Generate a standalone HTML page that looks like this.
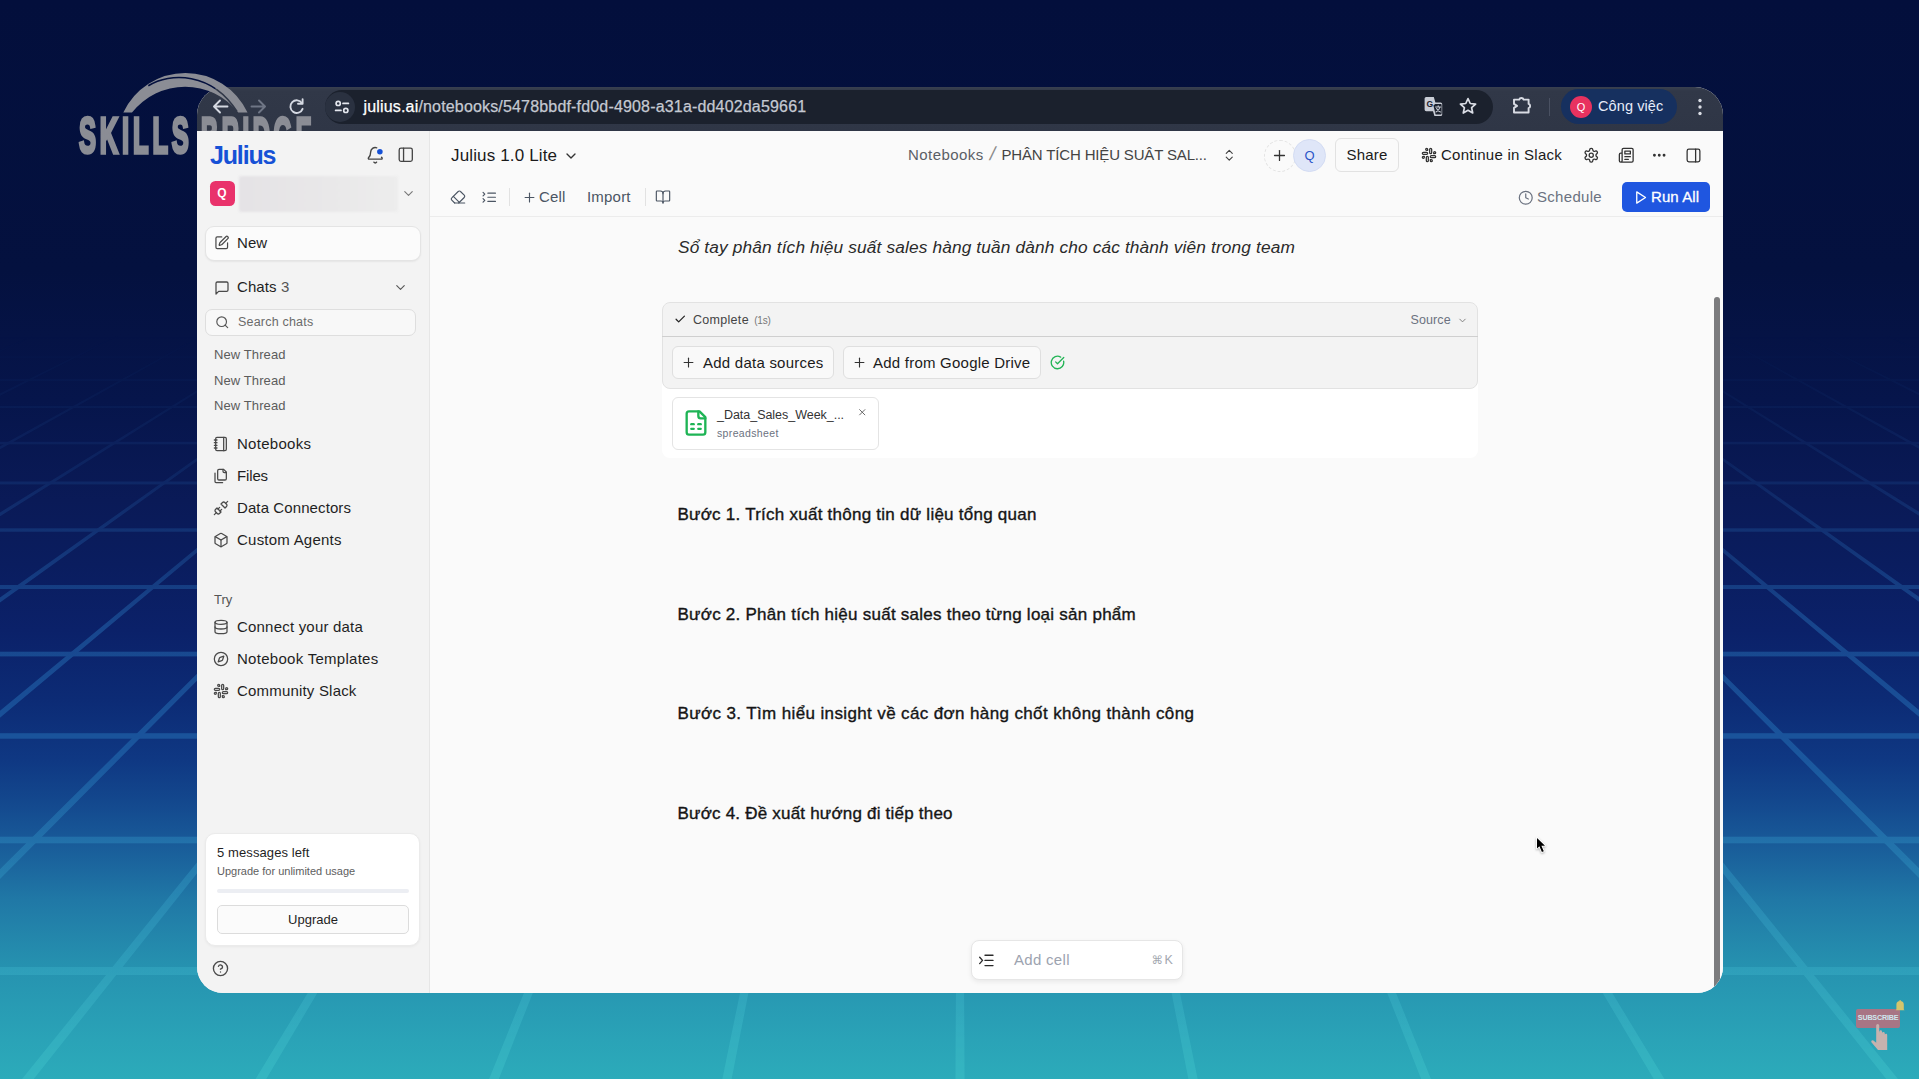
<!DOCTYPE html>
<html lang="vi">
<head>
<meta charset="utf-8">
<title>Julius</title>
<style>
*{box-sizing:border-box;margin:0;padding:0}
html,body{width:1919px;height:1079px;overflow:hidden}
body{font-family:"Liberation Sans",sans-serif;position:relative;background:#04103f;color:#1f1f1f}
.abs{position:absolute}
#bg{position:absolute;left:0;top:0;width:1919px;height:1079px;
 background:linear-gradient(180deg,#030f3c 0px,#04113f 270px,#06154b 400px,#0a1a57 500px,#0a1d5f 565px,#0b2169 630px,#0c2b75 700px,#0f3883 760px,#13478d 800px,#185998 840px,#2078a6 900px,#2693b0 970px,#2aa3b7 1040px,#2cabba 1079px)}
#grid{position:absolute;left:0;top:0;width:1919px;height:1079px}
#win{position:absolute;left:197px;top:87px;width:1526.400px;height:906px;border-radius:28px 28px 26px 26px;overflow:hidden;background:#fafafa}
#chrome{position:absolute;left:0;top:0;width:1527px;height:44px;background:linear-gradient(180deg,#394050 0,#313848 4px,#2f3646 100%)}
#url{position:absolute;left:128px;top:3px;width:1168px;height:34px;border-radius:17px;background:#1b212d}
#url .t{position:absolute;left:38.500px;top:7.500px;font-size:16px;color:#c5c9d2;letter-spacing:.17px;white-space:nowrap;-webkit-text-stroke:.25px #c5c9d2}
#url .t b{font-weight:400;color:#fff;-webkit-text-stroke:.25px #fff}
#side{position:absolute;left:0;top:44px;width:233px;height:862px;background:#f3f3f3;border-right:1px solid #e6e6e6}
#main{position:absolute;left:233px;top:44px;width:1293px;height:862px;background:#fafafa}
.ico{position:absolute;fill:none;stroke:#3f3f46;stroke-width:1.6;stroke-linecap:round;stroke-linejoin:round}
.nav{position:absolute;left:40px;font-size:15px;color:#1f1f1f;white-space:nowrap;letter-spacing:.1px}
.thr{position:absolute;left:17px;font-size:13px;color:#5c5c5c;white-space:nowrap;letter-spacing:.1px}
.h{position:absolute;left:480px;font-size:17px;font-weight:400;color:#151515;white-space:nowrap;-webkit-text-stroke:.36px #151515}
</style>
</head>
<body>
<div id="bg"></div>
<svg id="grid" viewBox="0 0 1919 1079" width="1919" height="1079">
<defs>
<linearGradient id="gfade" x1="0" y1="0" x2="0" y2="1">
<stop offset="0.31" stop-color="#fff" stop-opacity="0"/>
<stop offset="0.44" stop-color="#fff" stop-opacity="0.14"/>
<stop offset="0.58" stop-color="#fff" stop-opacity="0.40"/>
<stop offset="0.70" stop-color="#fff" stop-opacity="0.40"/>
<stop offset="0.83" stop-color="#fff" stop-opacity="0.33"/>
<stop offset="1" stop-color="#fff" stop-opacity="0.27"/>
</linearGradient>
<mask id="gmask" maskUnits="userSpaceOnUse" x="0" y="0" width="1919" height="1079"><rect x="0" y="0" width="1919" height="1079" fill="url(#gfade)"/></mask>
<linearGradient id="gcol" gradientUnits="userSpaceOnUse" x1="0" y1="0" x2="0" y2="1079">
<stop offset="0.3" stop-color="#2f6fc0"/>
<stop offset="0.7" stop-color="#2c86c8"/>
<stop offset="1" stop-color="#4fd6d6"/>
</linearGradient>
</defs>
<g mask="url(#gmask)" fill="url(#gcol)">
<polygon points="-14.6,320 -87.0,350 -159.5,380 -232.0,410 -304.5,440 -376.9,470 -449.4,500 -521.9,530 -594.4,560 -666.9,590 -739.3,620 -811.8,650 -884.3,680 -956.8,710 -1029.2,740 -1101.7,770 -1174.2,800 -1246.7,830 -1319.2,860 -1391.6,890 -1464.1,920 -1536.6,950 -1609.1,980 -1681.5,1010 -1754.0,1040 -1826.5,1070 -1899.0,1100 -1874.7,1100 -1803.0,1070 -1731.4,1040 -1659.7,1010 -1588.0,980 -1516.4,950 -1444.7,920 -1373.0,890 -1301.4,860 -1229.7,830 -1158.0,800 -1086.4,770 -1014.7,740 -943.0,710 -871.4,680 -799.7,650 -728.1,620 -656.4,590 -584.7,560 -513.1,530 -441.4,500 -369.7,470 -298.1,440 -226.4,410 -154.7,380 -83.1,350 -11.4,320"/>
<polygon points="66.6,320 0.2,350 -66.2,380 -132.7,410 -199.1,440 -265.6,470 -332.0,500 -398.5,530 -464.9,560 -531.4,590 -597.8,620 -664.2,650 -730.7,680 -797.1,710 -863.6,740 -930.0,770 -996.5,800 -1062.9,830 -1129.3,860 -1195.8,890 -1262.2,920 -1328.7,950 -1395.1,980 -1461.6,1010 -1528.0,1040 -1594.4,1070 -1660.9,1100 -1638.3,1100 -1572.6,1070 -1506.9,1040 -1441.3,1010 -1375.6,980 -1309.9,950 -1244.2,920 -1178.5,890 -1112.8,860 -1047.1,830 -981.4,800 -915.8,770 -850.1,740 -784.4,710 -718.7,680 -653.0,650 -587.3,620 -521.6,590 -455.9,560 -390.2,530 -324.6,500 -258.9,470 -193.2,440 -127.5,410 -61.8,380 3.9,350 69.6,320"/>
<polygon points="147.8,320 87.4,350 27.0,380 -33.4,410 -93.8,440 -154.2,470 -214.6,500 -275.0,530 -335.4,560 -395.9,590 -456.3,620 -516.7,650 -577.1,680 -637.5,710 -697.9,740 -758.3,770 -818.7,800 -879.1,830 -939.5,860 -999.9,890 -1060.4,920 -1120.8,950 -1181.2,980 -1241.6,1010 -1302.0,1040 -1362.4,1070 -1422.8,1100 -1401.9,1100 -1342.2,1070 -1282.5,1040 -1222.8,1010 -1163.1,980 -1103.4,950 -1043.7,920 -984.0,890 -924.2,860 -864.5,830 -804.8,800 -745.1,770 -685.4,740 -625.7,710 -566.0,680 -506.3,650 -446.6,620 -386.8,590 -327.1,560 -267.4,530 -207.7,500 -148.0,470 -88.3,440 -28.6,410 31.1,380 90.8,350 150.6,320"/>
<polygon points="229.0,320 174.6,350 120.3,380 65.9,410 11.5,440 -42.9,470 -97.2,500 -151.6,530 -206.0,560 -260.4,590 -314.7,620 -369.1,650 -423.5,680 -477.9,710 -532.2,740 -586.6,770 -641.0,800 -695.4,830 -749.7,860 -804.1,890 -858.5,920 -912.9,950 -967.2,980 -1021.6,1010 -1076.0,1040 -1130.4,1070 -1184.7,1100 -1165.5,1100 -1111.8,1070 -1058.1,1040 -1004.3,1010 -950.6,980 -896.9,950 -843.1,920 -789.4,890 -735.7,860 -681.9,830 -628.2,800 -574.5,770 -520.7,740 -467.0,710 -413.3,680 -359.5,650 -305.8,620 -252.1,590 -198.3,560 -144.6,530 -90.9,500 -37.1,470 16.6,440 70.3,410 124.1,380 177.8,350 231.5,320"/>
<polygon points="310.2,320 261.9,350 213.5,380 165.2,410 116.8,440 68.5,470 20.1,500 -28.2,530 -76.5,560 -124.9,590 -173.2,620 -221.6,650 -269.9,680 -318.2,710 -366.6,740 -414.9,770 -463.3,800 -511.6,830 -560.0,860 -608.3,890 -656.6,920 -705.0,950 -753.3,980 -801.7,1010 -850.0,1040 -898.4,1070 -946.7,1100 -929.1,1100 -881.3,1070 -833.6,1040 -785.8,1010 -738.1,980 -690.3,950 -642.6,920 -594.8,890 -547.1,860 -499.3,830 -451.6,800 -403.8,770 -356.0,740 -308.3,710 -260.5,680 -212.8,650 -165.0,620 -117.3,590 -69.5,560 -21.8,530 26.0,500 73.7,470 121.5,440 169.2,410 217.0,380 264.7,350 312.5,320"/>
<polygon points="391.4,320 349.1,350 306.8,380 264.5,410 222.1,440 179.8,470 137.5,500 95.2,530 52.9,560 10.6,590 -31.7,620 -74.0,650 -116.3,680 -158.7,710 -201.0,740 -243.3,770 -285.6,800 -327.9,830 -370.2,860 -412.5,890 -454.8,920 -497.1,950 -539.4,980 -581.8,1010 -624.1,1040 -666.4,1070 -708.7,1100 -692.6,1100 -650.9,1070 -609.1,1040 -567.3,1010 -525.5,980 -483.8,950 -442.0,920 -400.2,890 -358.4,860 -316.7,830 -274.9,800 -233.1,770 -191.3,740 -149.6,710 -107.8,680 -66.0,650 -24.3,620 17.5,590 59.3,560 101.1,530 142.8,500 184.6,470 226.4,440 268.2,410 309.9,380 351.7,350 393.5,320"/>
<polygon points="472.6,320 436.3,350 400.0,380 363.7,410 327.4,440 291.2,470 254.9,500 218.6,530 182.3,560 146.0,590 109.8,620 73.5,650 37.2,680 0.9,710 -35.4,740 -71.6,770 -107.9,800 -144.2,830 -180.5,860 -216.8,890 -253.0,920 -289.3,950 -325.6,980 -361.9,1010 -398.2,1040 -434.4,1070 -470.7,1100 -456.1,1100 -420.3,1070 -384.5,1040 -348.8,1010 -313.0,980 -277.2,950 -241.4,920 -205.6,890 -169.8,860 -134.0,830 -98.2,800 -62.4,770 -26.6,740 9.2,710 45.0,680 80.8,650 116.5,620 152.3,590 188.1,560 223.9,530 259.7,500 295.5,470 331.3,440 367.1,410 402.9,380 438.7,350 474.5,320"/>
<polygon points="553.7,320 523.5,350 493.2,380 463.0,410 432.7,440 402.5,470 372.2,500 342.0,530 311.7,560 281.5,590 251.2,620 221.0,650 190.7,680 160.5,710 130.2,740 100.0,770 69.7,800 39.5,830 9.2,860 -21.0,890 -51.3,920 -81.5,950 -111.8,980 -142.0,1010 -172.3,1040 -202.5,1070 -232.8,1100 -219.6,1100 -189.8,1070 -160.0,1040 -130.2,1010 -100.3,980 -70.5,950 -40.7,920 -10.9,890 18.9,860 48.7,830 78.5,800 108.3,770 138.1,740 167.9,710 197.7,680 227.6,650 257.4,620 287.2,590 317.0,560 346.8,530 376.6,500 406.4,470 436.2,440 466.0,410 495.8,380 525.6,350 555.5,320"/>
<polygon points="634.9,320 610.7,350 586.4,380 562.2,410 538.0,440 513.8,470 489.6,500 465.3,530 441.1,560 416.9,590 392.7,620 368.4,650 344.2,680 320.0,710 295.8,740 271.5,770 247.3,800 223.1,830 198.9,860 174.6,890 150.4,920 126.2,950 102.0,980 77.7,1010 53.5,1040 29.3,1070 5.1,1100 17.0,1100 40.9,1070 64.7,1040 88.5,1010 112.3,980 136.1,950 160.0,920 183.8,890 207.6,860 231.4,830 255.3,800 279.1,770 302.9,740 326.7,710 350.6,680 374.4,650 398.2,620 422.0,590 445.9,560 469.7,530 493.5,500 517.3,470 541.2,440 565.0,410 588.8,380 612.6,350 636.5,320"/>
<polygon points="716.0,320 697.8,350 679.6,380 661.4,410 643.2,440 625.0,470 606.8,500 588.6,530 570.4,560 552.2,590 534.0,620 515.8,650 497.6,680 479.4,710 461.2,740 443.0,770 424.8,800 406.6,830 388.4,860 370.2,890 352.0,920 333.8,950 315.6,980 297.4,1010 279.2,1040 261.0,1070 242.8,1100 253.7,1100 271.6,1070 289.4,1040 307.2,1010 325.1,980 342.9,950 360.7,920 378.6,890 396.4,860 414.3,830 432.1,800 449.9,770 467.8,740 485.6,710 503.4,680 521.3,650 539.1,620 556.9,590 574.8,560 592.6,530 610.5,500 628.3,470 646.1,440 664.0,410 681.8,380 699.6,350 717.5,320"/>
<polygon points="797.2,320 785.0,350 772.8,380 760.6,410 748.5,440 736.3,470 724.1,500 711.9,530 699.7,560 687.6,590 675.4,620 663.2,650 651.0,680 638.8,710 626.7,740 614.5,770 602.3,800 590.1,830 577.9,860 565.8,890 553.6,920 541.4,950 529.2,980 517.0,1010 504.9,1040 492.7,1070 480.5,1100 490.5,1100 502.4,1070 514.2,1040 526.1,1010 537.9,980 549.8,950 561.6,920 573.5,890 585.3,860 597.1,830 609.0,800 620.8,770 632.7,740 644.5,710 656.4,680 668.2,650 680.1,620 691.9,590 703.7,560 715.6,530 727.4,500 739.3,470 751.1,440 763.0,410 774.8,380 786.6,350 798.5,320"/>
<polygon points="878.3,320 872.1,350 866.0,380 859.8,410 853.6,440 847.5,470 841.3,500 835.1,530 829.0,560 822.8,590 816.6,620 810.5,650 804.3,680 798.2,710 792.0,740 785.8,770 779.7,800 773.5,830 767.3,860 761.2,890 755.0,920 748.8,950 742.7,980 736.5,1010 730.3,1040 724.2,1070 718.0,1100 727.5,1100 733.4,1070 739.2,1040 745.1,1010 750.9,980 756.8,950 762.6,920 768.4,890 774.3,860 780.1,830 786.0,800 791.8,770 797.7,740 803.5,710 809.4,680 815.2,650 821.1,620 826.9,590 832.8,560 838.6,530 844.5,500 850.3,470 856.2,440 862.0,410 867.8,380 873.7,350 879.5,320"/>
<polygon points="959.4,320 959.2,350 959.1,380 958.9,410 958.8,440 958.6,470 958.5,500 958.3,530 958.1,560 958.0,590 957.8,620 957.7,650 957.5,680 957.4,710 957.2,740 957.1,770 956.9,800 956.7,830 956.6,860 956.4,890 956.3,920 956.1,950 956.0,980 955.8,1010 955.6,1040 955.5,1070 955.3,1100 964.7,1100 964.5,1070 964.4,1040 964.2,1010 964.0,980 963.9,950 963.7,920 963.6,890 963.4,860 963.3,830 963.1,800 962.9,770 962.8,740 962.6,710 962.5,680 962.3,650 962.2,620 962.0,590 961.9,560 961.7,530 961.5,500 961.4,470 961.2,440 961.1,410 960.9,380 960.8,350 960.6,320"/>
<polygon points="1040.5,320 1046.3,350 1052.2,380 1058.0,410 1063.8,440 1069.7,470 1075.5,500 1081.4,530 1087.2,560 1093.1,590 1098.9,620 1104.8,650 1110.6,680 1116.5,710 1122.3,740 1128.2,770 1134.0,800 1139.9,830 1145.7,860 1151.6,890 1157.4,920 1163.2,950 1169.1,980 1174.9,1010 1180.8,1040 1186.6,1070 1192.5,1100 1202.0,1100 1195.8,1070 1189.7,1040 1183.5,1010 1177.3,980 1171.2,950 1165.0,920 1158.8,890 1152.7,860 1146.5,830 1140.3,800 1134.2,770 1128.0,740 1121.8,710 1115.7,680 1109.5,650 1103.4,620 1097.2,590 1091.0,560 1084.9,530 1078.7,500 1072.5,470 1066.4,440 1060.2,410 1054.0,380 1047.9,350 1041.7,320"/>
<polygon points="1121.5,320 1133.4,350 1145.2,380 1157.0,410 1168.9,440 1180.7,470 1192.6,500 1204.4,530 1216.3,560 1228.1,590 1239.9,620 1251.8,650 1263.6,680 1275.5,710 1287.3,740 1299.2,770 1311.0,800 1322.9,830 1334.7,860 1346.5,890 1358.4,920 1370.2,950 1382.1,980 1393.9,1010 1405.8,1040 1417.6,1070 1429.5,1100 1439.5,1100 1427.3,1070 1415.1,1040 1403.0,1010 1390.8,980 1378.6,950 1366.4,920 1354.2,890 1342.1,860 1329.9,830 1317.7,800 1305.5,770 1293.3,740 1281.2,710 1269.0,680 1256.8,650 1244.6,620 1232.4,590 1220.3,560 1208.1,530 1195.9,500 1183.7,470 1171.5,440 1159.4,410 1147.2,380 1135.0,350 1122.8,320"/>
<polygon points="1202.5,320 1220.4,350 1238.2,380 1256.0,410 1273.9,440 1291.7,470 1309.5,500 1327.4,530 1345.2,560 1363.1,590 1380.9,620 1398.7,650 1416.6,680 1434.4,710 1452.2,740 1470.1,770 1487.9,800 1505.7,830 1523.6,860 1541.4,890 1559.3,920 1577.1,950 1594.9,980 1612.8,1010 1630.6,1040 1648.4,1070 1666.3,1100 1677.2,1100 1659.0,1070 1640.8,1040 1622.6,1010 1604.4,980 1586.2,950 1568.0,920 1549.8,890 1531.6,860 1513.4,830 1495.2,800 1477.0,770 1458.8,740 1440.6,710 1422.4,680 1404.2,650 1386.0,620 1367.8,590 1349.6,560 1331.4,530 1313.2,500 1295.0,470 1276.8,440 1258.6,410 1240.4,380 1222.2,350 1204.0,320"/>
<polygon points="1283.5,320 1307.4,350 1331.2,380 1355.0,410 1378.8,440 1402.7,470 1426.5,500 1450.3,530 1474.1,560 1498.0,590 1521.8,620 1545.6,650 1569.4,680 1593.3,710 1617.1,740 1640.9,770 1664.7,800 1688.6,830 1712.4,860 1736.2,890 1760.0,920 1783.9,950 1807.7,980 1831.5,1010 1855.3,1040 1879.1,1070 1903.0,1100 1914.9,1100 1890.7,1070 1866.5,1040 1842.3,1010 1818.0,980 1793.8,950 1769.6,920 1745.4,890 1721.1,860 1696.9,830 1672.7,800 1648.5,770 1624.2,740 1600.0,710 1575.8,680 1551.6,650 1527.3,620 1503.1,590 1478.9,560 1454.7,530 1430.4,500 1406.2,470 1382.0,440 1357.8,410 1333.6,380 1309.3,350 1285.1,320"/>
<polygon points="1364.5,320 1394.4,350 1424.2,380 1454.0,410 1483.8,440 1513.6,470 1543.4,500 1573.2,530 1603.0,560 1632.8,590 1662.6,620 1692.4,650 1722.3,680 1752.1,710 1781.9,740 1811.7,770 1841.5,800 1871.3,830 1901.1,860 1930.9,890 1960.7,920 1990.5,950 2020.3,980 2050.2,1010 2080.0,1040 2109.8,1070 2139.6,1100 2152.8,1100 2122.5,1070 2092.3,1040 2062.0,1010 2031.8,980 2001.5,950 1971.3,920 1941.0,890 1910.8,860 1880.5,830 1850.3,800 1820.0,770 1789.8,740 1759.5,710 1729.3,680 1699.0,650 1668.8,620 1638.5,590 1608.3,560 1578.0,530 1547.8,500 1517.5,470 1487.3,440 1457.0,410 1426.8,380 1396.5,350 1366.3,320"/>
<polygon points="1445.5,320 1481.3,350 1517.1,380 1552.9,410 1588.7,440 1624.5,470 1660.3,500 1696.1,530 1731.9,560 1767.7,590 1803.5,620 1839.2,650 1875.0,680 1910.8,710 1946.6,740 1982.4,770 2018.2,800 2054.0,830 2089.8,860 2125.6,890 2161.4,920 2197.2,950 2233.0,980 2268.8,1010 2304.5,1040 2340.3,1070 2376.1,1100 2390.7,1100 2354.4,1070 2318.2,1040 2281.9,1010 2245.6,980 2209.3,950 2173.0,920 2136.8,890 2100.5,860 2064.2,830 2027.9,800 1991.6,770 1955.4,740 1919.1,710 1882.8,680 1846.5,650 1810.2,620 1774.0,590 1737.7,560 1701.4,530 1665.1,500 1628.8,470 1592.6,440 1556.3,410 1520.0,380 1483.7,350 1447.4,320"/>
<polygon points="1526.5,320 1568.3,350 1610.1,380 1651.8,410 1693.6,440 1735.4,470 1777.2,500 1818.9,530 1860.7,560 1902.5,590 1944.3,620 1986.0,650 2027.8,680 2069.6,710 2111.3,740 2153.1,770 2194.9,800 2236.7,830 2278.4,860 2320.2,890 2362.0,920 2403.8,950 2445.5,980 2487.3,1010 2529.1,1040 2570.9,1070 2612.6,1100 2628.7,1100 2586.4,1070 2544.1,1040 2501.8,1010 2459.4,980 2417.1,950 2374.8,920 2332.5,890 2290.2,860 2247.9,830 2205.6,800 2163.3,770 2121.0,740 2078.7,710 2036.3,680 1994.0,650 1951.7,620 1909.4,590 1867.1,560 1824.8,530 1782.5,500 1740.2,470 1697.9,440 1655.5,410 1613.2,380 1570.9,350 1528.6,320"/>
<polygon points="1607.5,320 1655.3,350 1703.0,380 1750.8,410 1798.5,440 1846.3,470 1894.0,500 1941.8,530 1989.5,560 2037.3,590 2085.0,620 2132.8,650 2180.5,680 2228.3,710 2276.0,740 2323.8,770 2371.6,800 2419.3,830 2467.1,860 2514.8,890 2562.6,920 2610.3,950 2658.1,980 2705.8,1010 2753.6,1040 2801.3,1070 2849.1,1100 2866.7,1100 2818.4,1070 2770.0,1040 2721.7,1010 2673.3,980 2625.0,950 2576.6,920 2528.3,890 2480.0,860 2431.6,830 2383.3,800 2334.9,770 2286.6,740 2238.2,710 2189.9,680 2141.6,650 2093.2,620 2044.9,590 1996.5,560 1948.2,530 1899.9,500 1851.5,470 1803.2,440 1754.8,410 1706.5,380 1658.1,350 1609.8,320"/>
<polygon points="1688.5,320 1742.2,350 1795.9,380 1849.7,410 1903.4,440 1957.1,470 2010.9,500 2064.6,530 2118.3,560 2172.1,590 2225.8,620 2279.5,650 2333.3,680 2387.0,710 2440.7,740 2494.5,770 2548.2,800 2601.9,830 2655.7,860 2709.4,890 2763.1,920 2816.9,950 2870.6,980 2924.3,1010 2978.1,1040 3031.8,1070 3085.5,1100 3104.7,1100 3050.4,1070 2996.0,1040 2941.6,1010 2887.2,980 2832.9,950 2778.5,920 2724.1,890 2669.7,860 2615.4,830 2561.0,800 2506.6,770 2452.2,740 2397.9,710 2343.5,680 2289.1,650 2234.7,620 2180.4,590 2126.0,560 2071.6,530 2017.2,500 1962.9,470 1908.5,440 1854.1,410 1799.7,380 1745.4,350 1691.0,320"/>
<polygon points="1769.4,320 1829.2,350 1888.9,380 1948.6,410 2008.3,440 2068.0,470 2127.7,500 2187.4,530 2247.1,560 2306.8,590 2366.6,620 2426.3,650 2486.0,680 2545.7,710 2605.4,740 2665.1,770 2724.8,800 2784.5,830 2844.2,860 2904.0,890 2963.7,920 3023.4,950 3083.1,980 3142.8,1010 3202.5,1040 3262.2,1070 3321.9,1100 3342.8,1100 3282.4,1070 3222.0,1040 3161.6,1010 3101.2,980 3040.8,950 2980.4,920 2919.9,890 2859.5,860 2799.1,830 2738.7,800 2678.3,770 2617.9,740 2557.5,710 2497.1,680 2436.7,650 2376.3,620 2315.9,590 2255.4,560 2195.0,530 2134.6,500 2074.2,470 2013.8,440 1953.4,410 1893.0,380 1832.6,350 1772.2,320"/>
<polygon points="1850.4,320 1916.1,350 1981.8,380 2047.5,410 2113.2,440 2178.9,470 2244.6,500 2310.2,530 2375.9,560 2441.6,590 2507.3,620 2573.0,650 2638.7,680 2704.4,710 2770.1,740 2835.8,770 2901.4,800 2967.1,830 3032.8,860 3098.5,890 3164.2,920 3229.9,950 3295.6,980 3361.3,1010 3426.9,1040 3492.6,1070 3558.3,1100 3580.9,1100 3514.4,1070 3448.0,1040 3381.6,1010 3315.1,980 3248.7,950 3182.2,920 3115.8,890 3049.3,860 2982.9,830 2916.5,800 2850.0,770 2783.6,740 2717.1,710 2650.7,680 2584.2,650 2517.8,620 2451.4,590 2384.9,560 2318.5,530 2252.0,500 2185.6,470 2119.1,440 2052.7,410 1986.2,380 1919.8,350 1853.4,320"/>
<polygon points="1931.4,320 2003.1,350 2074.7,380 2146.4,410 2218.1,440 2289.7,470 2361.4,500 2433.1,530 2504.7,560 2576.4,590 2648.1,620 2719.7,650 2791.4,680 2863.0,710 2934.7,740 3006.4,770 3078.0,800 3149.7,830 3221.4,860 3293.0,890 3364.7,920 3436.4,950 3508.0,980 3579.7,1010 3651.4,1040 3723.0,1070 3794.7,1100 3819.0,1100 3746.5,1070 3674.0,1040 3601.5,1010 3529.1,980 3456.6,950 3384.1,920 3311.6,890 3239.2,860 3166.7,830 3094.2,800 3021.7,770 2949.2,740 2876.8,710 2804.3,680 2731.8,650 2659.3,620 2586.9,590 2514.4,560 2441.9,530 2369.4,500 2296.9,470 2224.5,440 2152.0,410 2079.5,380 2007.0,350 1934.6,320"/>
<rect x="0" y="967.0" width="1919" height="8.0"/>
<rect x="0" y="836.7" width="1919" height="6.6"/>
<rect x="0" y="733.2" width="1919" height="5.5"/>
<rect x="0" y="651.7" width="1919" height="4.7"/>
<rect x="0" y="585.0" width="1919" height="4.0"/>
<rect x="0" y="528.3" width="1919" height="3.4"/>
<rect x="0" y="481.5" width="1919" height="2.9"/>
<rect x="0" y="441.8" width="1919" height="2.5"/>
<rect x="0" y="405.9" width="1919" height="2.1"/>
<rect x="0" y="379.1" width="1919" height="1.8"/>
<rect x="0" y="356.2" width="1919" height="1.6"/>
<rect x="0" y="337.3" width="1919" height="1.4"/>
</g>
</svg>

<div id="win">
 <div id="chrome">
  <svg class="abs" style="left:0;top:0" width="1526" height="44" viewBox="0 0 1526 44" fill="none" stroke-linecap="round" stroke-linejoin="round">
   <!-- back -->
   <path d="M30.5 19.5H17.5M23 13.5l-6 6 6 6" stroke="#d5d9e2" stroke-width="1.9"/>
   <!-- forward -->
   <path d="M54.5 19.5h13M62 13.5l6 6-6 6" stroke="#6f7686" stroke-width="1.9"/>
   <!-- reload -->
   <path d="M105 16.2a6.3 6.3 0 1 0 .6 5.6" stroke="#d5d9e2" stroke-width="1.9"/>
   <path d="M105.6 12.2v4.6h-4.6" stroke="#d5d9e2" stroke-width="1.9"/>
  </svg>
  <div id="url">
   <div class="abs" style="left:0;top:2px;width:30px;height:30px;border-radius:15px;background:#2a3140"></div>
   <svg class="abs" style="left:8px;top:8px" width="18" height="18" viewBox="0 0 18 18" fill="none" stroke="#e4e7ee" stroke-width="1.7" stroke-linecap="round">
    <circle cx="5.2" cy="5.4" r="2.1"/><path d="M10 5.4h5.4"/><circle cx="12.8" cy="12.4" r="2.1"/><path d="M2.6 12.4H8"/>
   </svg>
   <div class="t"><b>julius.ai</b>/notebooks/5478bbdf-fd0d-4908-a31a-dd402da59661</div>
   <!-- translate -->
   <svg class="abs" style="left:1099px;top:6px" width="20" height="21" viewBox="0 0 20 21">
    <path d="M2.200 1h7.600l1.600 5.400h5.200a1.600 1.600 0 0 1 1.600 1.600v10.400a1.600 1.600 0 0 1-1.600 1.600H10.400L9 15.200H2.200A1.600 1.600 0 0 1 .600 13.600V2.600A1.600 1.600 0 0 1 2.200 1z" fill="#c9cdd6"/>
    <path d="M11.200 8h5.600a.8.800 0 0 1 .8.800v9a.8.800 0 0 1-.8.800h-5.200L9.400 9.600z" fill="#1b212d"/>
    <text x="2.400" y="11.400" font-family="Liberation Sans,sans-serif" font-size="8.500" font-weight="700" fill="#1b212d">G</text>
    <path d="M11.600 11h5.200M14.200 9.800V11M16 11c-.5 2.200-2 4-4 5M12.600 12.600c.7 1.500 2 2.700 3.800 3.400" stroke="#c9cdd6" stroke-width="1.100" fill="none" stroke-linecap="round"/>
   </svg>
   <!-- star -->
   <svg class="abs" style="left:1133px;top:6.300px" width="20" height="20" viewBox="0 0 20 20" fill="none" stroke="#d9dce4" stroke-width="1.7" stroke-linejoin="round">
    <path d="M10 2.6l2.25 4.9 5.35.6-3.98 3.62 1.1 5.28L10 14.3l-4.72 2.7 1.1-5.28L2.4 8.1l5.35-.6z"/>
   </svg>
  </div>
  <!-- extensions -->
  <svg class="abs" style="left:1313.500px;top:7px" width="22" height="22" viewBox="0 0 22 22" fill="none" stroke="#d9dce4" stroke-width="1.900" stroke-linejoin="round">
   <path d="M3 5.600h5.200a2.300 2.300 0 0 1 4.400 0h5v4.300a2.200 2.200 0 0 1 0 4.200v4.400H3v-4.600l3-2-3-2z"/>
  </svg>
  <div class="abs" style="left:1352px;top:11px;width:1px;height:18px;background:#4a5162"></div>
  <div class="abs" style="left:1364px;top:2px;width:116px;height:35px;border-radius:18px;background:#16305f"></div>
  <div class="abs" style="left:1373px;top:9px;width:22px;height:22px;border-radius:11px;background:#e8325f;color:#fff;font-size:11px;line-height:22px;text-align:center">Q</div>
  <div class="abs" style="left:1401px;top:11px;font-size:14.5px;color:#e6ecfa;white-space:nowrap;letter-spacing:.1px">Công việc</div>
  <svg class="abs" style="left:1498px;top:9px" width="10" height="22" viewBox="0 0 10 22" fill="#d9dce4"><circle cx="5" cy="4.5" r="1.7"/><circle cx="5" cy="11" r="1.7"/><circle cx="5" cy="17.5" r="1.7"/></svg>
 </div>
 <div id="side">
  <div class="abs" style="left:13px;top:8.800px;font-size:25px;font-weight:700;color:#1651d6;letter-spacing:-1.150px;line-height:30px">Julius</div>
  <svg class="ico" style="left:169.25px;top:14.75px;stroke:#444;stroke-width:1.8" width="18.5" height="18.5" viewBox="0 0 24 24"><path d="M10.268 21a2 2 0 0 0 3.464 0"/><path d="M13.916 2.314A6 6 0 0 0 6 8c0 4.499-1.411 5.956-2.738 7.326A1 1 0 0 0 4 17h16a1 1 0 0 0 .74-1.673 9 9 0 0 1-.585-.665"/><circle cx="18" cy="7.500" r="3.600" fill="#1651d6" stroke="none"/></svg>
  <svg class="ico" style="left:199.75px;top:15.25px;stroke:#444;stroke-width:1.8" width="17.5" height="17.5" viewBox="0 0 24 24"><rect width="18" height="18" x="3" y="3" rx="2.500"/><path d="M9 3v18"/></svg>
  <div class="abs" style="left:12.500px;top:49.600px;width:25px;height:25px;border-radius:5.500px;background:#e9326b;color:#fff;font-size:12px;font-weight:700;line-height:25px;text-align:center">Q</div>
  <div class="abs" style="left:41.500px;top:44.500px;width:159px;height:36px;border-radius:2px;background:linear-gradient(90deg,#e5e3e6,#e9e8e9 55%,#ededed);filter:blur(1px)"></div>
  <svg class="ico" style="left:204px;top:54.5px;stroke:#777;stroke-width:1.8" width="15" height="15" viewBox="0 0 24 24"><path d="m6 9 6 6 6-6"/></svg>

  <div class="abs" style="left:7.500px;top:94.500px;width:216.300px;height:35.400px;border-radius:9px;background:#fbfbfb;border:1px solid #e4e4e4;box-shadow:0 1px 2px rgba(0,0,0,.06)"></div>
  <svg class="ico" style="left:16.75px;top:104.25px;stroke:#4a4a4a;stroke-width:1.9" width="15.5" height="15.5" viewBox="0 0 24 24"><path d="M12 3H5a2 2 0 0 0-2 2v14a2 2 0 0 0 2 2h14a2 2 0 0 0 2-2v-7"/><path d="M18.375 2.625a1 1 0 0 1 3 3l-9.013 9.014a2 2 0 0 1-.853.505l-2.873.84a.5.5 0 0 1-.62-.62l.84-2.873a2 2 0 0 1 .506-.852z"/></svg>
  <div class="nav" style="top:103px">New</div>

  <svg class="ico" style="left:16.5px;top:148.5px;stroke:#4a4a4a;stroke-width:1.9" width="16" height="16" viewBox="0 0 24 24"><path d="M21 15a2 2 0 0 1-2 2H7l-4 4V5a2 2 0 0 1 2-2h14a2 2 0 0 1 2 2z"/></svg>
  <div class="nav" style="top:147px">Chats <span style="color:#555">3</span></div>
  <svg class="ico" style="left:195.5px;top:149px;stroke:#555;stroke-width:1.8" width="15" height="15" viewBox="0 0 24 24"><path d="m6 9 6 6 6-6"/></svg>

  <div class="abs" style="left:8.300px;top:177.800px;width:210.500px;height:27.500px;border-radius:7px;background:#f8f8f8;border:1px solid #dedede"></div>
  <svg class="ico" style="left:18.25px;top:184.25px;stroke:#555;stroke-width:1.9" width="14.5" height="14.5" viewBox="0 0 24 24"><circle cx="11" cy="11" r="8"/><path d="m21 21-4.300-4.300"/></svg>
  <div class="abs" style="left:41px;top:184px;font-size:12.500px;color:#6b6b6b;white-space:nowrap;letter-spacing:.2px">Search chats</div>

  <div class="thr" style="top:216px">New Thread</div>
  <div class="thr" style="top:242px">New Thread</div>
  <div class="thr" style="top:267px">New Thread</div>

  <svg class="ico" style="left:15.7px;top:305px;stroke:#4a4a4a;stroke-width:1.9" width="16" height="16" viewBox="0 0 24 24"><path d="M2 6h4"/><path d="M2 10h4"/><path d="M2 14h4"/><path d="M2 18h4"/><rect width="16" height="20" x="4" y="2" rx="2"/><path d="M16 2v20"/></svg>
  <div class="nav" style="top:304px;letter-spacing:.28px">Notebooks</div>
  <svg class="ico" style="left:16.3px;top:337px;stroke:#4a4a4a;stroke-width:1.9" width="16" height="16" viewBox="0 0 24 24"><path d="M20 7h-3a2 2 0 0 1-2-2V2"/><path d="M9 18a2 2 0 0 1-2-2V4a2 2 0 0 1 2-2h7l4 4v10a2 2 0 0 1-2 2Z"/><path d="M3 7.600v12.800A1.600 1.600 0 0 0 4.600 22h9.800"/></svg>
  <div class="nav" style="top:336px;letter-spacing:-.14px">Files</div>
  <svg class="ico" style="left:16.3px;top:369px;stroke:#4a4a4a;stroke-width:1.9" width="16" height="16" viewBox="0 0 24 24"><path d="m19 5 3-3"/><path d="m2 22 3-3"/><path d="M6.300 20.300a2.400 2.400 0 0 0 3.400 0L12 18l-6-6-2.300 2.300a2.400 2.400 0 0 0 0 3.400Z"/><path d="M7.500 13.500 10 11"/><path d="M10.500 16.500 13 14"/><path d="m12 6 6 6 2.300-2.300a2.400 2.400 0 0 0 0-3.400l-2.600-2.600a2.400 2.400 0 0 0-3.400 0Z"/></svg>
  <div class="nav" style="top:368px">Data Connectors</div>
  <svg class="ico" style="left:16.3px;top:400.5px;stroke:#4a4a4a;stroke-width:1.9" width="16" height="16" viewBox="0 0 24 24"><path d="M21 8a2 2 0 0 0-1-1.730l-7-4a2 2 0 0 0-2 0l-7 4A2 2 0 0 0 3 8v8a2 2 0 0 0 1 1.730l7 4a2 2 0 0 0 2 0l7-4A2 2 0 0 0 21 16Z"/><path d="m3.300 7 8.700 5 8.700-5"/><path d="M12 22V12"/></svg>
  <div class="nav" style="top:400px;letter-spacing:.23px">Custom Agents</div>

  <div class="abs" style="left:17px;top:461px;font-size:13px;color:#555">Try</div>
  <svg class="ico" style="left:16px;top:488.3px;stroke:#4a4a4a;stroke-width:1.9" width="16" height="16" viewBox="0 0 24 24"><ellipse cx="12" cy="5" rx="9" ry="3"/><path d="M3 5V19A9 3 0 0 0 21 19V5"/><path d="M3 12A9 3 0 0 0 21 12"/></svg>
  <div class="nav" style="top:487px;letter-spacing:.2px">Connect your data</div>
  <svg class="ico" style="left:16px;top:520px;stroke:#4a4a4a;stroke-width:1.9" width="16" height="16" viewBox="0 0 24 24"><path d="m16.240 7.760-1.804 5.411a2 2 0 0 1-1.265 1.265L7.760 16.240l1.804-5.411a2 2 0 0 1 1.265-1.265z"/><circle cx="12" cy="12" r="10"/></svg>
  <div class="nav" style="top:519px;letter-spacing:.28px">Notebook Templates</div>
  <svg class="ico" style="left:16px;top:552px;stroke:#4a4a4a;stroke-width:1.9" width="16" height="16" viewBox="0 0 24 24"><rect width="3" height="8" x="13" y="2" rx="1.500"/><path d="M19 8.500V10h1.500A1.500 1.500 0 1 0 19 8.500"/><rect width="3" height="8" x="8" y="14" rx="1.500"/><path d="M5 15.500V14H3.500A1.500 1.500 0 1 0 5 15.500"/><rect width="8" height="3" x="14" y="13" rx="1.500"/><path d="M15.500 19H14v1.500a1.500 1.500 0 1 0 1.500-1.500"/><rect width="8" height="3" x="2" y="8" rx="1.500"/><path d="M8.500 5H10V3.500A1.500 1.500 0 1 0 8.500 5"/></svg>
  <div class="nav" style="top:551px;letter-spacing:.19px">Community Slack</div>

  <div class="abs" style="left:8.300px;top:701.800px;width:215px;height:112.800px;border-radius:10px;background:#fff;border:1px solid #ebebeb;box-shadow:0 1px 3px rgba(0,0,0,.05)"></div>
  <div class="abs" style="left:20px;top:714px;font-size:13px;color:#1f1f1f;white-space:nowrap;letter-spacing:.1px">5 messages left</div>
  <div class="abs" style="left:20px;top:733.600px;font-size:11px;color:#5e5e5e;white-space:nowrap">Upgrade for unlimited usage</div>
  <div class="abs" style="left:20px;top:758px;width:192px;height:4px;border-radius:2px;background:#eceef3"></div>
  <div class="abs" style="left:20px;top:774px;width:192px;height:29px;border-radius:5px;background:#fbfbfb;border:1px solid #dcdcdc;font-size:13px;line-height:27px;text-align:center;color:#1f1f1f">Upgrade</div>
  <svg class="ico" style="left:14.5px;top:829.2px;stroke:#4a4a4a;stroke-width:1.9" width="17" height="17" viewBox="0 0 24 24"><circle cx="12" cy="12" r="10"/><path d="M9.090 9a3 3 0 0 1 5.830 1c0 2-3 3-3 3"/><path d="M12 17h.010"/></svg>
 </div>
 <div id="main">
  <div class="abs" style="left:21px;top:15px;font-size:17px;color:#1b1b1b;white-space:nowrap;letter-spacing:.15px">Julius 1.0 Lite</div>

  <div class="abs" style="left:478px;top:15px;font-size:15px;color:#5a5f66;white-space:nowrap;letter-spacing:.44px">Notebooks</div>
  <div class="abs" style="left:559.500px;top:11.500px;font-size:19px;color:#8a8a8a;white-space:nowrap;transform:skewX(-12deg)">/</div>
  <div class="abs" style="left:571.500px;top:15px;font-size:15px;color:#444;white-space:nowrap;letter-spacing:-.16px">PHÂN TÍCH HIỆU SUÂT SAL...</div>

  <div class="abs" style="left:834px;top:9px;width:32px;height:32px;border-radius:16px;border:1px dashed #e3e3e3"></div>
  <div class="abs" style="left:863px;top:7.800px;width:33px;height:33px;border-radius:16.500px;background:#dfe6f8;border:1px solid #d3dcf3;color:#2a55c8;font-size:13px;line-height:31px;text-align:center">Q</div>
  <div class="abs" style="left:905px;top:7px;width:64px;height:34px;border-radius:6px;background:#fafafa;border:1px solid #e2e2e2;font-size:15px;line-height:32px;text-align:center;color:#1b1b1b;letter-spacing:.2px">Share</div>
  <div class="abs" style="left:1011px;top:15px;font-size:15px;color:#1b1b1b;white-space:nowrap;letter-spacing:.25px">Continue in Slack</div>

  <!-- toolbar row -->
  <div class="abs" style="left:79px;top:57px;width:1px;height:18px;background:#e2e2e2"></div>
  <div class="abs" style="left:109px;top:57px;font-size:15px;color:#4b5563;white-space:nowrap;letter-spacing:.2px">Cell</div>
  <div class="abs" style="left:157px;top:57px;font-size:15px;color:#4b5563;white-space:nowrap;letter-spacing:.2px">Import</div>
  <div class="abs" style="left:215px;top:57px;width:1px;height:18px;background:#e2e2e2"></div>
  <div class="abs" style="left:1107px;top:57px;font-size:15px;color:#6b7280;white-space:nowrap;letter-spacing:.3px">Schedule</div>
  <div class="abs" style="left:1192px;top:51px;width:88px;height:30px;border-radius:5px;background:#1f56e0"></div>
  <div class="abs" style="left:1221px;top:57px;font-size:15px;color:#fff;white-space:nowrap;-webkit-text-stroke:.3px #fff;letter-spacing:.1px">Run All</div>
  <div class="abs" style="left:0;top:85px;width:1293px;height:1px;background:#ececec"></div>

  <!-- content -->
  <div class="abs" style="left:248px;top:105.500px;font-size:17.300px;font-style:italic;color:#2a2a2a;white-space:nowrap;letter-spacing:.14px">Sổ tay phân tích hiệu suất sales hàng tuần dành cho các thành viên trong team</div>

  <div class="abs" style="left:232px;top:171px;width:816px;height:156px;border-radius:8px;background:#fff"></div>
  <div class="abs" style="left:232px;top:171px;width:816px;height:87px;border-radius:8px;background:#f3f3f3;border:1px solid #e2e2e2"></div>
  <div class="abs" style="left:232px;top:204.700px;width:816px;height:1px;background:#cfcfcf"></div>
  <div class="abs" style="left:263px;top:181.800px;font-size:12.500px;color:#444;white-space:nowrap;letter-spacing:.3px">Complete <span style="font-size:10px;color:#777;letter-spacing:-.2px;margin-left:1.500px">(1s)</span></div>
  <div class="abs" style="left:980.500px;top:182px;font-size:12.500px;color:#6b7280;white-space:nowrap;letter-spacing:.1px">Source</div>

  <div class="abs" style="left:242px;top:214.500px;width:161.500px;height:33.500px;border-radius:6px;background:#f9f9f9;border:1px solid #dfdfdf"></div>
  <div class="abs" style="left:273px;top:223px;font-size:15px;color:#1b1b1b;white-space:nowrap;letter-spacing:.24px">Add data sources</div>
  <div class="abs" style="left:412.500px;top:214.500px;width:198.500px;height:33.500px;border-radius:6px;background:#f9f9f9;border:1px solid #dfdfdf"></div>
  <div class="abs" style="left:443px;top:223px;font-size:15px;color:#1b1b1b;white-space:nowrap;letter-spacing:.23px">Add from Google Drive</div>

  <div class="abs" style="left:242px;top:266px;width:207px;height:53px;border-radius:6px;background:#fff;border:1px solid #e4e4e4"></div>
  <div class="abs" style="left:287px;top:277px;font-size:12.500px;color:#333;white-space:nowrap;letter-spacing:-.03px">_Data_Sales_Week_...</div>
  <div class="abs" style="left:287px;top:296px;font-size:10.500px;color:#6b7280;white-space:nowrap;letter-spacing:.36px">spreadsheet</div>

  <div class="h" style="left:247.500px;top:374px;letter-spacing:.25px">Bước 1. Trích xuất thông tin dữ liệu tổng quan</div>
  <div class="h" style="left:247.500px;top:474px;letter-spacing:.253px">Bước 2. Phân tích hiệu suất sales theo từng loại sản phẩm</div>
  <div class="h" style="left:247.500px;top:573px;letter-spacing:.374px">Bước 3. Tìm hiểu insight về các đơn hàng chốt không thành công</div>
  <div class="h" style="left:247.500px;top:673px;letter-spacing:.21px">Bước 4. Đề xuất hướng đi tiếp theo</div>

  <div class="abs" style="left:541px;top:809px;width:211.500px;height:40px;border-radius:8px;background:#fff;border:1px solid #e6e6e6;box-shadow:0 2px 5px rgba(0,0,0,.07)"></div>
  <div class="abs" style="left:584px;top:820px;font-size:15px;color:#9ca3af;white-space:nowrap;letter-spacing:.3px">Add cell</div>
  <div class="abs" style="left:721.500px;top:821.800px;font-size:11.500px;color:#a3a8b0;white-space:nowrap;font-family:'DejaVu Sans','Liberation Sans',sans-serif">⌘<span style="font-family:'Liberation Sans',sans-serif;font-size:12.500px;margin-left:1.500px">K</span></div>

  <svg class="ico" style="left:132.5px;top:16.5px;stroke:#333;stroke-width:2" width="16" height="16" viewBox="0 0 24 24"><path d="m6 9 6 6 6-6"/></svg>
  <svg class="ico" style="left:791.75px;top:16.75px;stroke:#444;stroke-width:1.9" width="14.5" height="14.5" viewBox="0 0 24 24"><path d="m7 15 5 5 5-5"/><path d="m7 9 5-5 5 5"/></svg>
  <svg class="ico" style="left:841px;top:15.5px;stroke:#333;stroke-width:1.8" width="17" height="17" viewBox="0 0 24 24"><path d="M5 12h14"/><path d="M12 5v14"/></svg>
  <svg class="ico" style="left:990.5px;top:16.3px;stroke:#333;stroke-width:1.9" width="16" height="16" viewBox="0 0 24 24"><rect width="3" height="8" x="13" y="2" rx="1.500"/><path d="M19 8.500V10h1.500A1.500 1.500 0 1 0 19 8.500"/><rect width="3" height="8" x="8" y="14" rx="1.500"/><path d="M5 15.500V14H3.500A1.500 1.500 0 1 0 5 15.500"/><rect width="8" height="3" x="14" y="13" rx="1.500"/><path d="M15.500 19H14v1.500a1.500 1.500 0 1 0 1.500-1.500"/><rect width="8" height="3" x="2" y="8" rx="1.500"/><path d="M8.500 5H10V3.500A1.500 1.500 0 1 0 8.500 5"/></svg>
  <svg class="ico" style="left:1153.25px;top:15.75px;stroke:#333;stroke-width:1.9" width="16.5" height="16.5" viewBox="0 0 24 24"><path d="M12.220 2h-.440a2 2 0 0 0-2 2v.180a2 2 0 0 1-1 1.730l-.430.250a2 2 0 0 1-2 0l-.150-.080a2 2 0 0 0-2.730.730l-.220.380a2 2 0 0 0 .730 2.730l.150.100a2 2 0 0 1 1 1.720v.510a2 2 0 0 1-1 1.740l-.150.090a2 2 0 0 0-.730 2.730l.220.380a2 2 0 0 0 2.730.730l.150-.080a2 2 0 0 1 2 0l.430.250a2 2 0 0 1 1 1.730V20a2 2 0 0 0 2 2h.440a2 2 0 0 0 2-2v-.180a2 2 0 0 1 1-1.730l.430-.250a2 2 0 0 1 2 0l.150.080a2 2 0 0 0 2.730-.730l.220-.390a2 2 0 0 0-.730-2.730l-.150-.080a2 2 0 0 1-1-1.740v-.500a2 2 0 0 1 1-1.740l.150-.090a2 2 0 0 0 .730-2.730l-.220-.380a2 2 0 0 0-2.730-.730l-.150.080a2 2 0 0 1-2 0l-.430-.250a2 2 0 0 1-1-1.730V4a2 2 0 0 0-2-2z"/><circle cx="12" cy="12" r="3"/></svg>
  <svg class="ico" style="left:1187.75px;top:15.75px;stroke:#333;stroke-width:1.9" width="16.5" height="16.5" viewBox="0 0 24 24"><path d="M4 22h16a2 2 0 0 0 2-2V4a2 2 0 0 0-2-2H8a2 2 0 0 0-2 2v16a2 2 0 0 1-2 2Zm0 0a2 2 0 0 1-2-2v-9c0-1.100.900-2 2-2h2"/><path d="M18 14h-8"/><path d="M15 18h-5"/><path d="M10 6h8v4h-8V6Z"/></svg>
  <svg class="ico" style="left:1221.25px;top:15.75px;stroke:#333;stroke-width:2.2" width="16.5" height="16.5" viewBox="0 0 24 24"><circle cx="12" cy="12" r="1"/><circle cx="19" cy="12" r="1"/><circle cx="5" cy="12" r="1"/></svg>
  <svg class="ico" style="left:1255px;top:15.5px;stroke:#333;stroke-width:1.8" width="17" height="17" viewBox="0 0 24 24"><rect width="18" height="18" x="3" y="3" rx="2.500"/><path d="M15 3v18"/></svg>
  <svg class="ico" style="left:19.5px;top:58px;stroke:#4b5563;stroke-width:1.75" width="16" height="16" viewBox="0 0 24 24"><path d="m7 21-4.300-4.300c-1-1-1-2.500 0-3.400l9.600-9.600c1-1 2.500-1 3.400 0l5.600 5.600c1 1 1 2.500 0 3.400L13 21"/><path d="M22 21H7"/><path d="m5 11 9 9"/></svg>
  <svg class="ico" style="left:51.25px;top:57.75px;stroke:#4b5563;stroke-width:1.75" width="16.5" height="16.5" viewBox="0 0 24 24"><path d="m3 10 2.500-2.500L3 5"/><path d="m3 19 2.500-2.500L3 14"/><path d="M10 6h11"/><path d="M10 12h11"/><path d="M10 18h11"/></svg>
  <svg class="ico" style="left:92px;top:59px;stroke:#4b5563;stroke-width:1.8" width="15" height="15" viewBox="0 0 24 24"><path d="M5 12h14"/><path d="M12 5v14"/></svg>
  <svg class="ico" style="left:225px;top:58px;stroke:#4b5563;stroke-width:1.75" width="16" height="16" viewBox="0 0 24 24"><path d="M12 7v14"/><path d="M3 18a1 1 0 0 1-1-1V4a1 1 0 0 1 1-1h5a4 4 0 0 1 4 4 4 4 0 0 1 4-4h5a1 1 0 0 1 1 1v13a1 1 0 0 1-1 1h-6a3 3 0 0 0-3 3 3 3 0 0 0-3-3z"/></svg>
  <svg class="ico" style="left:1088.25px;top:58.55px;stroke:#6b7280;stroke-width:1.9" width="15.5" height="15.5" viewBox="0 0 24 24"><circle cx="12" cy="12" r="10"/><polyline points="12 6 12 12 16 14"/></svg>
  <svg class="ico" style="left:1203px;top:58.8px;stroke:#fff;stroke-width:2.1" width="15" height="15" viewBox="0 0 24 24"><polygon points="6 3 20 12 6 21 6 3"/></svg>
  <svg class="ico" style="left:243.75px;top:182.25px;stroke:#222;stroke-width:2.4" width="12.5" height="12.5" viewBox="0 0 24 24"><path d="M20 6 9 17l-5-5"/></svg>
  <svg class="ico" style="left:1026.5px;top:183.5px;stroke:#777;stroke-width:2" width="11" height="11" viewBox="0 0 24 24"><path d="m6 9 6 6 6-6"/></svg>
  <svg class="ico" style="left:251.2px;top:224px;stroke:#333;stroke-width:1.8" width="15" height="15" viewBox="0 0 24 24"><path d="M5 12h14"/><path d="M12 5v14"/></svg>
  <svg class="ico" style="left:421.5px;top:224px;stroke:#333;stroke-width:1.8" width="15" height="15" viewBox="0 0 24 24"><path d="M5 12h14"/><path d="M12 5v14"/></svg>
  <svg class="ico" style="left:619.8px;top:224px;stroke:#22b455;stroke-width:2.1" width="15" height="15" viewBox="0 0 24 24"><path d="M21.801 10A10 10 0 1 1 17 3.335"/><path d="m9 11 3 3L22 4"/></svg>
  <svg class="ico" style="left:252px;top:278.2px;stroke:#1eb455;stroke-width:2" width="28" height="28" viewBox="0 0 24 24"><path d="M15 2H6a2 2 0 0 0-2 2v16a2 2 0 0 0 2 2h12a2 2 0 0 0 2-2V7Z"/><path d="M14 2v4a2 2 0 0 0 2 2h4"/><path d="M8 13h2"/><path d="M14 13h2"/><path d="M8 17h2"/><path d="M14 17h2"/></svg>
  <svg class="ico" style="left:426.75px;top:276.05px;stroke:#555;stroke-width:2" width="10.5" height="10.5" viewBox="0 0 24 24"><path d="M18 6 6 18"/><path d="m6 6 12 12"/></svg>
  <svg class="ico" style="left:549.300px;top:822.600px;stroke:#2a2a2a;stroke-width:1.350" width="15" height="13" viewBox="0 0 15 13"><path d="M6 1.200h8M6 6.400h8M6 11.600h8M.700 3.200L3.500 6.400L.700 9.600"/></svg>
  <!-- scrollbar -->
  <div class="abs" style="left:1284px;top:165.500px;width:6px;height:700px;border-radius:3px 3px 0 0;background:#7c7c7e"></div>
 </div>
</div>

<!-- watermark -->
<div class="abs" style="left:0;top:0;width:420px;height:200px;clip-path:polygon(0 0,420px 0,420px 131px,197px 131px,197px 200px,0 200px);pointer-events:none">
<svg class="abs" style="left:0;top:0" width="420" height="200" viewBox="0 0 420 200">
 <mask id="arcm" maskUnits="userSpaceOnUse" x="100" y="60" width="170" height="70"><rect x="100" y="60" width="170" height="70" fill="#fff"/><path d="M148.300 85.800C170 72 212 72 237 111.500" fill="none" stroke="#000" stroke-width="1.600"/></mask>
 <path d="M123.300 112.500A68.500 68.500 0 0 1 247.500 112.500L238.300 112.500A67.600 67.600 0 0 0 132 112.500Z" fill="#8b8d95" mask="url(#arcm)"/>
</svg>
<div id="wm1" class="abs" style="left:78.500px;top:107px;font-size:50px;line-height:58px;font-weight:700;color:#8b8d95;-webkit-text-stroke:3.600px #8b8d95;letter-spacing:7.500px;white-space:nowrap;transform-origin:0 0;transform:scaleX(.51)">SKILLS</div>
<div id="wm2" class="abs" style="left:200.500px;top:107px;font-size:50px;line-height:58px;font-weight:700;color:#8b8d95;-webkit-text-stroke:3.600px #8b8d95;letter-spacing:7.500px;white-space:nowrap;transform-origin:0 0;transform:scaleX(.477)">BRIDGE</div>
</div>
<!-- cursor -->
<svg class="abs" style="left:1533.900px;top:834.700px;filter:drop-shadow(0 1px 1.200px rgba(0,0,0,.3))" width="16" height="22" viewBox="-3 -3 16 22"><path d="M0 0V10.400L2.400 8.200L4.900 14L6.800 13.200L4.400 7.700H8Z" fill="#000" stroke="#fff" stroke-width="1.800" stroke-linejoin="round" paint-order="stroke"/></svg>
<!-- subscribe -->
<div class="abs" style="left:1856px;top:1008.500px;width:44px;height:19px;border-radius:2px;background:#a87585"></div>
<div class="abs" style="left:1857.800px;top:1013px;font-size:7.200px;font-weight:700;color:#cfe8ef;letter-spacing:-.2px;white-space:nowrap;line-height:9px">SUBSCRIBE</div>
<svg class="abs" style="left:1894px;top:999px" width="12" height="13" viewBox="0 0 12 13"><path d="M2.400 10.400V5.600a3.700 3.700 0 0 1 7.400 0v4.800l.8.800H1.600z" fill="#d4c56c"/><circle cx="6.100" cy="1.800" r=".8" fill="#d4c56c"/></svg>
<svg class="abs" style="left:1869px;top:1024px" width="22" height="27" viewBox="0 0 22 27"><path d="M7.200 1.600a1.500 1.500 0 0 1 3 0v7.200l.3-1.600a1.300 1.300 0 0 1 2.500.200l.2 1.400a1.300 1.300 0 0 1 2.500.300l.2 1.400a1.200 1.200 0 0 1 2.300.400V26H9L2.400 18.200a1.400 1.400 0 0 1 2-1.800l2.800 2.400z" fill="#c7b2ae"/></svg>
</body>
</html>
